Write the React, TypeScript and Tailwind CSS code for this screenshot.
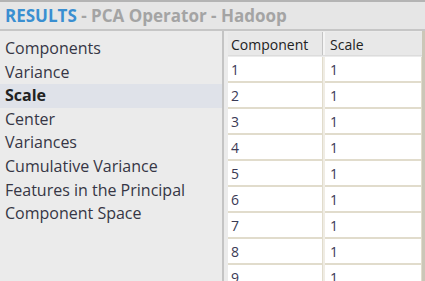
const items = [
  'Components',
  'Variance',
  'Scale',
  'Center',
  'Variances',
  'Cumulative Variance',
  'Features in the Principal Component Space',
];

const rows = [1, 2, 3, 4, 5, 6, 7, 8, 9];

export default function App() {
  const selected = 'Scale';

  return (
    <div className="w-[425px] h-[281px] overflow-hidden bg-[#ebebeb] font-['Open_Sans',sans-serif]">
      {/* Title bar */}
      <div className="h-[31px] border-t-2 border-t-[#b4b4b4] border-b-2 border-b-[#c6c6c6] bg-[#e6e6e6] flex items-center pl-[5px] text-[17px] font-bold whitespace-nowrap">
        <span className="text-[#3a8fd1]">RESULTS</span>
        <span className="text-[#a4a4a4]">&nbsp;- PCA Operator - Hadoop</span>
      </div>

      <div className="flex h-[250px]">
        {/* Result list */}
        <div className="w-[222px] pt-[6px] text-[16px] text-[#363645] leading-[23.6px]">
          {items.map((item) => (
            <div
              key={item}
              className={`pl-[5px] pr-2 ${item === selected ? 'bg-[#dfe2e9] font-bold text-[#222]' : ''}`}
            >
              {item}
            </div>
          ))}
        </div>

        <div className="w-[2px] bg-[#c4c4c4]" />

        {/* Table */}
        <div className="flex-1 flex">
          <div className="flex-1 pl-[4px] pt-[1px] text-[14px]">
            <div className="flex h-[24px] bg-[#e8e8e8] text-[#222] items-center border-b border-b-[#dcdcdc]">
              <div className="w-[95px] pl-[3px] pt-[2px] h-full flex items-center border-r border-r-[#c4c4c4]">Component</div>
              <div className="w-[2px] h-full bg-[#f4f4f4]" />
              <div className="flex-1 pl-[5px] pt-[2px]">Scale</div>
            </div>
            <div className="mt-[1px] flex flex-col">
              {rows.map((n) => (
                <div key={n} className="flex h-[26px] text-[#3a3a55]">
                  <div className="w-[95px] bg-white border-b-2 border-r border-[#e1dccc] pl-[3px] flex items-center">{n}</div>
                  <div className="w-[2px] bg-[#efece4]" />
                  <div className="flex-1 bg-white border-b-2 border-r border-[#e1dccc] pl-[5px] flex items-center">1</div>
                </div>
              ))}
            </div>
          </div>
          <div className="w-[3px] bg-[#cbc7b8]" />
        </div>
      </div>
    </div>
  );
}
